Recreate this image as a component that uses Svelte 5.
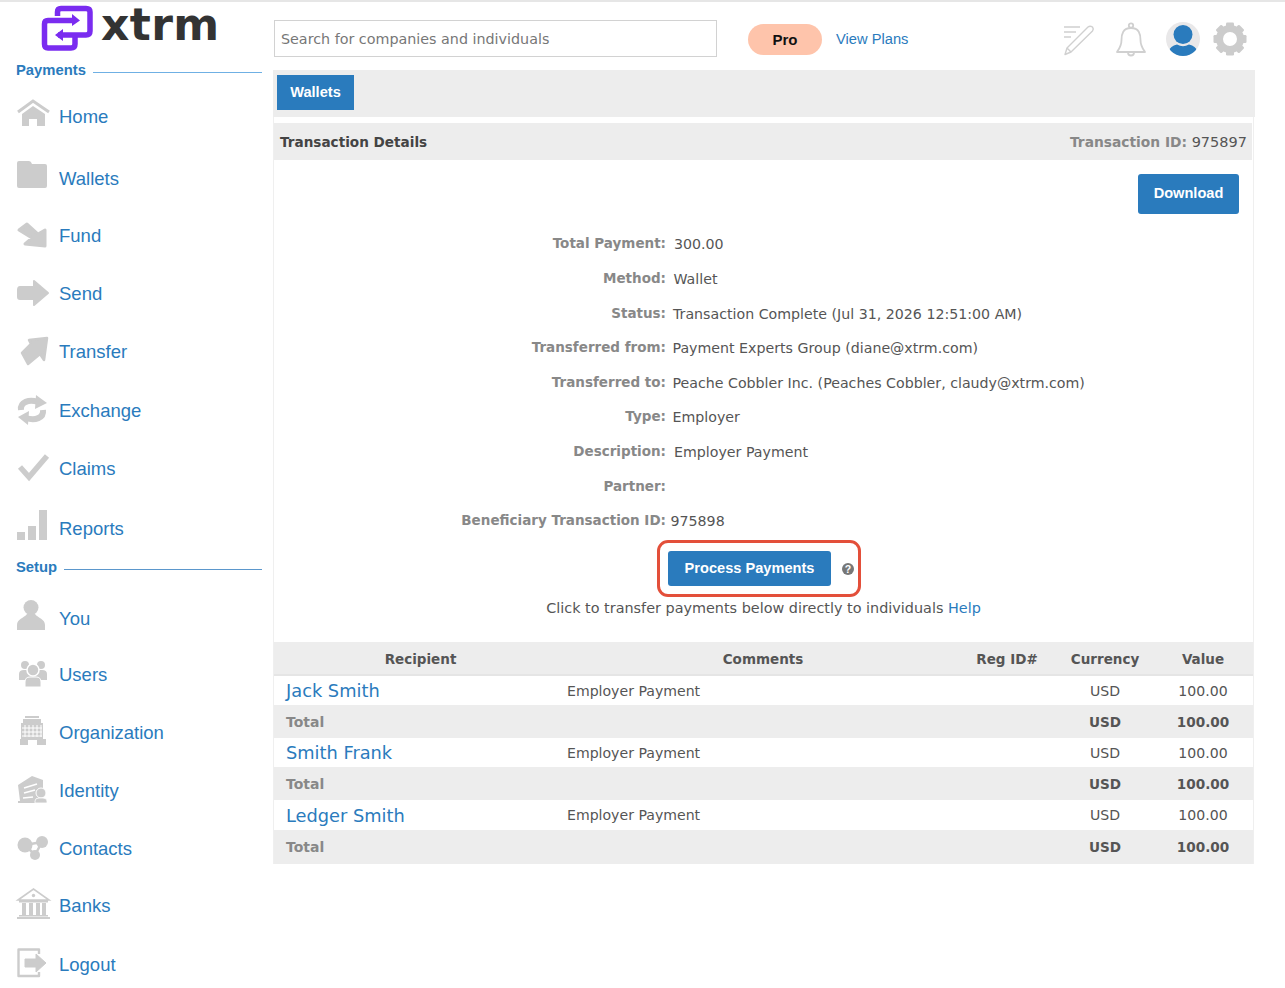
<script lang="ts">
	const payments = [
		{ label: 'Home', icon: 'home', gap: 13 },
		{ label: 'Wallets', icon: 'wallets', gap: 16 },
		{ label: 'Fund', icon: 'fund', gap: 11 },
		{ label: 'Send', icon: 'send', gap: 12 },
		{ label: 'Transfer', icon: 'transfer', gap: 12 },
		{ label: 'Exchange', icon: 'exchange', gap: 13 },
		{ label: 'Claims', icon: 'claims', gap: 12 },
		{ label: 'Reports', icon: 'reports', gap: 14 }
	];
	const setup = [
		{ label: 'You', icon: 'you', gap: 18 },
		{ label: 'Users', icon: 'users', gap: 10 },
		{ label: 'Organization', icon: 'org', gap: 12 },
		{ label: 'Identity', icon: 'identity', gap: 12 },
		{ label: 'Contacts', icon: 'contacts', gap: 12 },
		{ label: 'Banks', icon: 'banks', gap: 11 },
		{ label: 'Logout', icon: 'logout', gap: 13 }
	];
	const details = [
		{ label: 'Total Payment:', value: '300.00', off: 8 },
		{ label: 'Method:', value: 'Wallet', off: 7.5 },
		{ label: 'Status:', value: 'Transaction Complete (Jul 31, 2026 12:51:00 AM)', off: 7 },
		{ label: 'Transferred from:', value: 'Payment Experts Group (diane@xtrm.com)', off: 6.5 },
		{ label: 'Transferred to:', value: 'Peache Cobbler Inc. (Peaches Cobbler, claudy@xtrm.com)', off: 6.5 },
		{ label: 'Type:', value: 'Employer', off: 6.5 },
		{ label: 'Description:', value: 'Employer Payment', off: 8 },
		{ label: 'Partner:', value: '', off: 8 },
		{ label: 'Beneficiary Transaction ID:', value: '975898', off: 4.5 }
	];
	const recipients = [
		{ name: 'Jack Smith', h: 30, th: 33 },
		{ name: 'Smith Frank', h: 29, th: 33 },
		{ name: 'Ledger Smith', h: 30, th: 34 }
	];
	const gearTeeth = [0, 45, 90, 135, 180, 225, 270, 315];
</script>

{#snippet navIcon(name)}
	<svg class="nav-icon" viewBox="0 0 34 34" width="34" height="34">
		{#if name === 'home'}
			<path d="M1 13 L16 2 L32 13" fill="none" stroke="#ccc" stroke-width="3" />
			<path d="M16 7 L28 15 V27 H20 V20 H12 V27 H5 V15 Z" fill="#ccc" />
		{:else if name === 'wallets'}
			<path d="M2 0 H12 Q14 0 15 3 H28 Q30 3 30 5 V25 Q30 27 28 27 H2 Q0 27 0 25 V2 Q0 0 2 0 Z" fill="#ccc" />
		{:else if name === 'fund'}
			<path d="M2 12 L10 6 L21 16 L28 12 L28 28 L8 26 L15 20 Z" fill="#ccc" stroke="#ccc" stroke-width="3" stroke-linejoin="round" />
		{:else if name === 'send'}
			<path d="M3 11 H17 V5 L31 17 L17 29 V23 H3 Q1 23 1 21 V14 Q1 11 3 11 Z" fill="#ccc" stroke="#ccc" stroke-width="2" stroke-linejoin="round" />
		{:else if name === 'transfer'}
			<path d="M5 19 L14 10 L12 6 L30 4 L27 26 L23 20 L11 30 Z" fill="#ccc" stroke="#ccc" stroke-width="2.5" stroke-linejoin="round" />
		{:else if name === 'exchange'}
			<path d="M4 17 C3 9 12 6 21 9" fill="none" stroke="#ccc" stroke-width="6" />
			<path d="M19 2 L30 10 L18 16 Z" fill="#ccc" />
			<path d="M26 17 C27 25 18 28 9 25" fill="none" stroke="#ccc" stroke-width="6" />
			<path d="M11 32 L1 24 L12 18 Z" fill="#ccc" />
		{:else if name === 'claims'}
			<path d="M3 16 L12 26 L30 5" fill="none" stroke="#ccc" stroke-width="5.5" />
		{:else if name === 'reports'}
			<rect x="0" y="21" width="8" height="8" fill="#ccc" />
			<rect x="11" y="15" width="8" height="14" fill="#ccc" />
			<rect x="22" y="-1" width="8" height="30" fill="#ccc" />
		{:else if name === 'you'}
			<circle cx="14" cy="6.5" r="7.5" fill="#ccc" />
			<path d="M0 29 V24 C0 18 7 17 10 13 H18 C21 17 28 18 28 24 V29 Z" fill="#ccc" />
		{:else if name === 'users'}
			<circle cx="8" cy="8" r="4" fill="#ccc" />
			<circle cx="24" cy="8" r="4" fill="#ccc" />
			<path d="M2 23 V17 Q2 13 7 13 H25 Q30 13 30 17 V23 Z" fill="#ccc" />
			<circle cx="16" cy="13" r="6" fill="#ccc" stroke="#fff" stroke-width="1.5" />
			<path d="M8 30 V25 Q8 20 13 20 H19 Q24 20 24 25 V30 Z" fill="#ccc" stroke="#fff" stroke-width="1" />
		{:else if name === 'org'}
			<rect x="8" y="1" width="14" height="2" fill="#ccc" />
			<rect x="6" y="4" width="18" height="4" fill="#ccc" />
			<rect x="4" y="8" width="22" height="22" fill="#ccc" />
			<rect x="3" y="24" width="26" height="6" fill="#ccc" />
			<path d="M8 10 V22 M12 10 V22 M16 10 V22 M20 10 V22 M24 10 V22 M5 13 H25 M5 17 H25 M5 21 H25" stroke="#fff" stroke-width="1" />
			<rect x="11" y="25" width="9" height="5" fill="#fff" />
		{:else if name === 'identity'}
			<path d="M1 12 L15 3 L26 7 V21 L20 30 H1 V28 H3 Z" fill="#ccc" />
			<path d="M7 15 L20 11 M7 20 L18 17 M6 25 L16 24" stroke="#fff" stroke-width="1.6" />
			<circle cx="24" cy="20" r="5" fill="#ccc" stroke="#fff" stroke-width="1" />
			<path d="M18 30 V28 Q18 25 22 25 H26 Q30 25 30 28 V30 Z" fill="#ccc" stroke="#fff" stroke-width="0.8" />
		{:else if name === 'contacts'}
			<path d="M8 14 L25 11 M8 14 L18 24 M25 11 L18 24" stroke="#ccc" stroke-width="2.5" />
			<circle cx="8" cy="14" r="7.5" fill="#ccc" />
			<circle cx="25" cy="11" r="6" fill="#ccc" />
			<circle cx="18" cy="24" r="5" fill="#ccc" />
		{:else if name === 'banks'}
			<path d="M1 12 L16.5 1 L32 12 Z" fill="none" stroke="#ccc" stroke-width="1.6" />
			<circle cx="16.5" cy="7.5" r="1.7" fill="#ccc" />
			<rect x="2" y="12" width="29" height="2.5" fill="#ccc" />
			<rect x="5" y="15" width="4" height="12" fill="#ccc" />
			<rect x="12" y="15" width="4" height="12" fill="#ccc" />
			<rect x="19" y="15" width="4" height="12" fill="#ccc" />
			<rect x="25" y="15" width="4" height="12" fill="#ccc" />
			<rect x="2" y="27" width="29" height="1.5" fill="#ccc" />
			<rect x="0" y="29" width="33" height="2" fill="#ccc" />
		{:else if name === 'logout'}
			<path d="M22 7 V2.5 H1.5 V29 H22 V25" fill="none" stroke="#ccc" stroke-width="2.4" stroke-linejoin="round" />
			<path d="M8 12 H19 V7 L29 16 L19 25 V20 H8 Z" fill="#ccc" stroke="#ccc" stroke-linejoin="round" />
		{/if}
	</svg>
{/snippet}

{#snippet navList(items)}
	{#each items as item}
		<a class="nav-item" style="margin-top: {item.gap}px">
			{@render navIcon(item.icon)}
			<span>{item.label}</span>
		</a>
	{/each}
{/snippet}

<div class="page">
	<aside class="sidebar">
		<div class="logo">
			<svg viewBox="40 0 56 52" width="56" height="52">
				<g fill="none" stroke="#7a2cf0" stroke-width="5.5" stroke-linejoin="round">
					<path d="M57.5 14 V10 Q57.5 6.5 61 6.5 H86 Q90 6.5 90 10 V29 Q90 33 86 33 H58" />
					<path d="M75 35 V42 Q75 46 71 46 H48 Q44.5 46 44.5 42 V22 Q44.5 18.5 48 18.5 H74" />
				</g>
				<path d="M72 12 L80 18.5 L72 24 Z M63 27 L55 33 L63 39 Z" fill="#7a2cf0" />
			</svg>
			<span class="logo-text">xtrm</span>
		</div>
		<div class="section-head"><b>Payments</b><i class="light"></i></div>
		{@render navList(payments)}
		<div class="section-head setup"><b>Setup</b><i></i></div>
		{@render navList(setup)}
	</aside>

	<main class="content">
		<header class="topbar">
			<div class="search">Search for companies and individuals</div>
			<span class="pro">Pro</span>
			<a class="plans">View Plans</a>
			<div class="top-icons">
				<svg class="pen" viewBox="0 0 32 32" width="32" height="32" fill="none" stroke="#d0d0d0" stroke-width="1.4">
					<path d="M1 3 H17 M1 8 H13 M1 13 H8" />
					<path d="M4 24 L25 3 Q27 1.5 29.5 3 Q31 5 29.5 7 L8 28 L2 30.5 Z M4 24 L8 28" stroke-linejoin="round" />
				</svg>
				<svg class="bell" viewBox="0 0 32 36" width="32" height="36" fill="none" stroke="#d0d0d0" stroke-width="1.8">
					<circle cx="16" cy="3.5" r="2.2" />
					<path d="M16 6 C8 6 6.5 12 6.5 18 C6.5 24 4 27 2 30 H30 C28 27 25.5 24 25.5 18 C25.5 12 24 6 16 6 Z" stroke-linejoin="round" />
					<path d="M13 30.5 A3 3 0 0 0 19 30.5" />
				</svg>
				<svg class="avatar" viewBox="0 0 34 34" width="34" height="34">
					<clipPath id="avatar-clip"><circle cx="17" cy="17" r="17" /></clipPath>
					<circle cx="17" cy="17" r="17" fill="#e9e8e9" />
					<g clip-path="url(#avatar-clip)">
						<circle cx="17" cy="12.5" r="9.5" fill="#2a7bbd" />
						<path d="M3 34 V29 Q4 24 11 22.5 Q17 26 23 22.5 Q30 24 31 29 V34 Z" fill="#2a7bbd" />
					</g>
				</svg>
				<svg class="gear" viewBox="0 0 34 34" width="34" height="34">
					{#each gearTeeth as angle}
						<rect x="13" y="0.5" width="8" height="8" rx="1.2" fill="#ccc" transform="rotate({angle} 17 17)" />
					{/each}
					<circle cx="17" cy="17" r="10.5" fill="none" stroke="#ccc" stroke-width="7" />
				</svg>
			</div>
		</header>

		<div class="tabs"><button class="tab">Wallets</button></div>

		<section class="panel">
			<div class="panel-head">
				<strong>Transaction Details</strong>
				<span class="txn"><b>Transaction ID:</b> 975897</span>
			</div>

			<div class="download-row"><button class="btn download">Download</button></div>

			<div class="details">
				{#each details as row}
					<div class="detail-row">
						<span class="detail-label">{row.label}</span>
						<span class="detail-value" style="padding-left: {row.off}px">{row.value}</span>
					</div>
				{/each}
			</div>

			<div class="process">
				<button class="btn process-btn">Process Payments</button>
				<span class="hint">?</span>
			</div>
			<p class="process-note">Click to transfer payments below directly to individuals <a>Help</a></p>

			<table>
				<colgroup>
					<col style="width: 293px" /><col style="width: 392px" /><col style="width: 96px" /><col style="width: 100px" /><col />
				</colgroup>
				<thead>
					<tr>
						<th>Recipient</th>
						<th>Comments</th>
						<th>Reg ID#</th>
						<th>Currency</th>
						<th class="value">Value</th>
					</tr>
				</thead>
				<tbody>
					{#each recipients as r}
						<tr style="height: {r.h}px">
							<td class="name"><a>{r.name}</a></td>
							<td>Employer Payment</td>
							<td></td>
							<td class="num">USD</td>
							<td class="num value">100.00</td>
						</tr>
						<tr class="total" style="height: {r.th}px">
							<td class="total-label">Total</td>
							<td></td>
							<td></td>
							<td class="num">USD</td>
							<td class="num value">100.00</td>
						</tr>
					{/each}
				</tbody>
			</table>
		</section>
	</main>
</div>

<style>
	:global(body) {
		margin: 0;
		background: #fff;
	}
	.page {
		display: flex;
		border-top: 2px solid #e6e6e6;
		font-family: 'DejaVu Sans', sans-serif;
		font-size: 13px;
		color: #555;
	}

	.sidebar {
		width: 273px;
		flex: none;
		font-family: 'Liberation Sans', Arial, sans-serif;
	}
	.logo {
		height: 58px;
		display: flex;
		padding-left: 40px;
		box-sizing: border-box;
	}
	.logo-text {
		font-family: 'DejaVu Sans', sans-serif;
		font-weight: 700;
		font-size: 44px;
		line-height: 46px;
		letter-spacing: 0.4px;
		color: #333;
		margin-left: 5px;
	}
	.section-head {
		height: 20px;
		display: flex;
		align-items: center;
		padding: 0 11px 0 16px;
		gap: 7px;
	}
	.section-head.setup {
		margin-top: 6px;
	}
	.section-head b {
		font-size: 14.8px;
		color: #2a7bbd;
	}
	.section-head i {
		flex: 1;
		height: 1px;
		margin-top: 4px;
		background: #5b97cc;
	}
	.section-head i.light {
		background: #6fb0e4;
	}
	.nav-item {
		height: 46px;
		display: flex;
		align-items: center;
		padding-left: 17px;
		gap: 8px;
		font-size: 18.5px;
		color: #2a7bbd;
	}
	.nav-item span {
		padding-top: 2px;
	}
	.nav-icon {
		flex: none;
		overflow: visible;
	}

	.content {
		width: 982px;
		flex: none;
	}
	.topbar {
		height: 68px;
		display: flex;
		align-items: flex-start;
	}
	.search {
		width: 443px;
		height: 37px;
		box-sizing: border-box;
		margin: 18px 0 0 1px;
		padding-left: 6px;
		border: 1px solid #d2d2d2;
		line-height: 36px;
		font-size: 14.3px;
		color: #777;
	}
	.pro {
		width: 74px;
		height: 31px;
		margin: 22px 0 0 31px;
		border-radius: 16px;
		background: #fec4ab;
		font: 700 15px/31px 'Liberation Sans', Arial, sans-serif;
		color: #111;
		text-align: center;
	}
	.plans {
		margin: 28px 0 0 14px;
		font: 14.7px/18px 'Liberation Sans', Arial, sans-serif;
		color: #2a7bbd;
	}
	.top-icons {
		margin-left: auto;
		width: 192px;
		height: 68px;
		display: flex;
		align-items: flex-start;
		box-sizing: border-box;
	}
	.pen {
		margin: 22px 0 0 0;
	}
	.bell {
		margin: 20px 0 0 20px;
	}
	.avatar {
		margin: 20px 0 0 19px;
	}
	.gear {
		margin: 20px 0 0 13px;
	}

	.tabs {
		height: 47px;
		box-sizing: border-box;
		padding: 5px 0 0 4px;
		background: #ededed;
	}
	button {
		border: none;
		color: #fff;
		background: #2a7bbd;
		font: 700 14.6px 'Liberation Sans', Arial, sans-serif;
		padding: 0 0 2px;
	}
	.tab {
		width: 77px;
		height: 35px;
	}

	.panel {
		width: 981px;
		box-sizing: border-box;
		padding-top: 6px;
		border-left: 1px solid #efefef;
		border-right: 1px solid #efefef;
	}
	.panel-head {
		height: 37px;
		margin-right: 1px;
		padding: 0 5px 0 6px;
		display: flex;
		justify-content: space-between;
		align-items: center;
		background: #ededed;
	}
	.panel-head strong {
		font-size: 13.6px;
		color: #444;
	}
	.txn {
		font-size: 14.5px;
		color: #555;
	}
	.txn b {
		font-size: 13.8px;
		color: #888;
	}
	.download-row {
		display: flex;
		justify-content: flex-end;
		padding: 14px 14px 0 0;
	}
	.btn {
		border-radius: 3px;
	}
	.download {
		width: 101px;
		height: 40px;
	}
	.details {
		margin-top: 13.1px;
	}
	.detail-row {
		height: 34.6px;
		display: flex;
		align-items: center;
	}
	.detail-label {
		width: 392px;
		flex: none;
		box-sizing: border-box;
		padding-bottom: 2px;
		text-align: right;
		font-weight: 700;
		color: #888;
		font-size: 13.5px;
	}
	.detail-value {
		font-size: 14.2px;
		color: #555;
	}
	.process {
		width: 204px;
		height: 57px;
		box-sizing: border-box;
		margin: 1.6px 0 0 383px;
		padding: 8px 4px 8px 8px;
		border: 3px solid #e34f3a;
		border-radius: 11px;
		display: flex;
		align-items: center;
		gap: 11px;
	}
	.process-btn {
		width: 163px;
		height: 35px;
		flex: none;
	}
	.hint {
		width: 12px;
		height: 12px;
		border-radius: 50%;
		background: #777;
		color: #fff;
		font: 700 10.5px/12px 'Liberation Sans', Arial, sans-serif;
		text-align: center;
	}
	.process-note {
		margin: 0;
		height: 22px;
		line-height: 22px;
		text-align: center;
		font-size: 14.4px;
		color: #555;
	}
	.process-note a {
		color: #2a7bbd;
	}

	table {
		width: 979px;
		margin-top: 23px;
		border-collapse: collapse;
		table-layout: fixed;
		font-size: 14.1px;
	}
	th {
		height: 33px;
		padding: 2px 0 0;
		background: #ededed;
		border-bottom: 2px solid #e5e5e5;
		box-sizing: border-box;
		font-size: 13.5px;
		font-weight: 700;
		color: #555;
		text-align: center;
	}
	td {
		padding: 0;
		color: #555;
	}
	.name {
		padding-left: 12px;
		font-size: 17.8px;
	}
	.name a {
		color: #2a7bbd;
	}
	.num {
		text-align: center;
	}
	.value {
		padding-right: 2px;
	}
	.total td {
		background: #ededed;
		font-weight: 700;
		font-size: 13.6px;
	}
	.total .total-label {
		padding-left: 12px;
		font-size: 14px;
		color: #888;
	}
</style>
